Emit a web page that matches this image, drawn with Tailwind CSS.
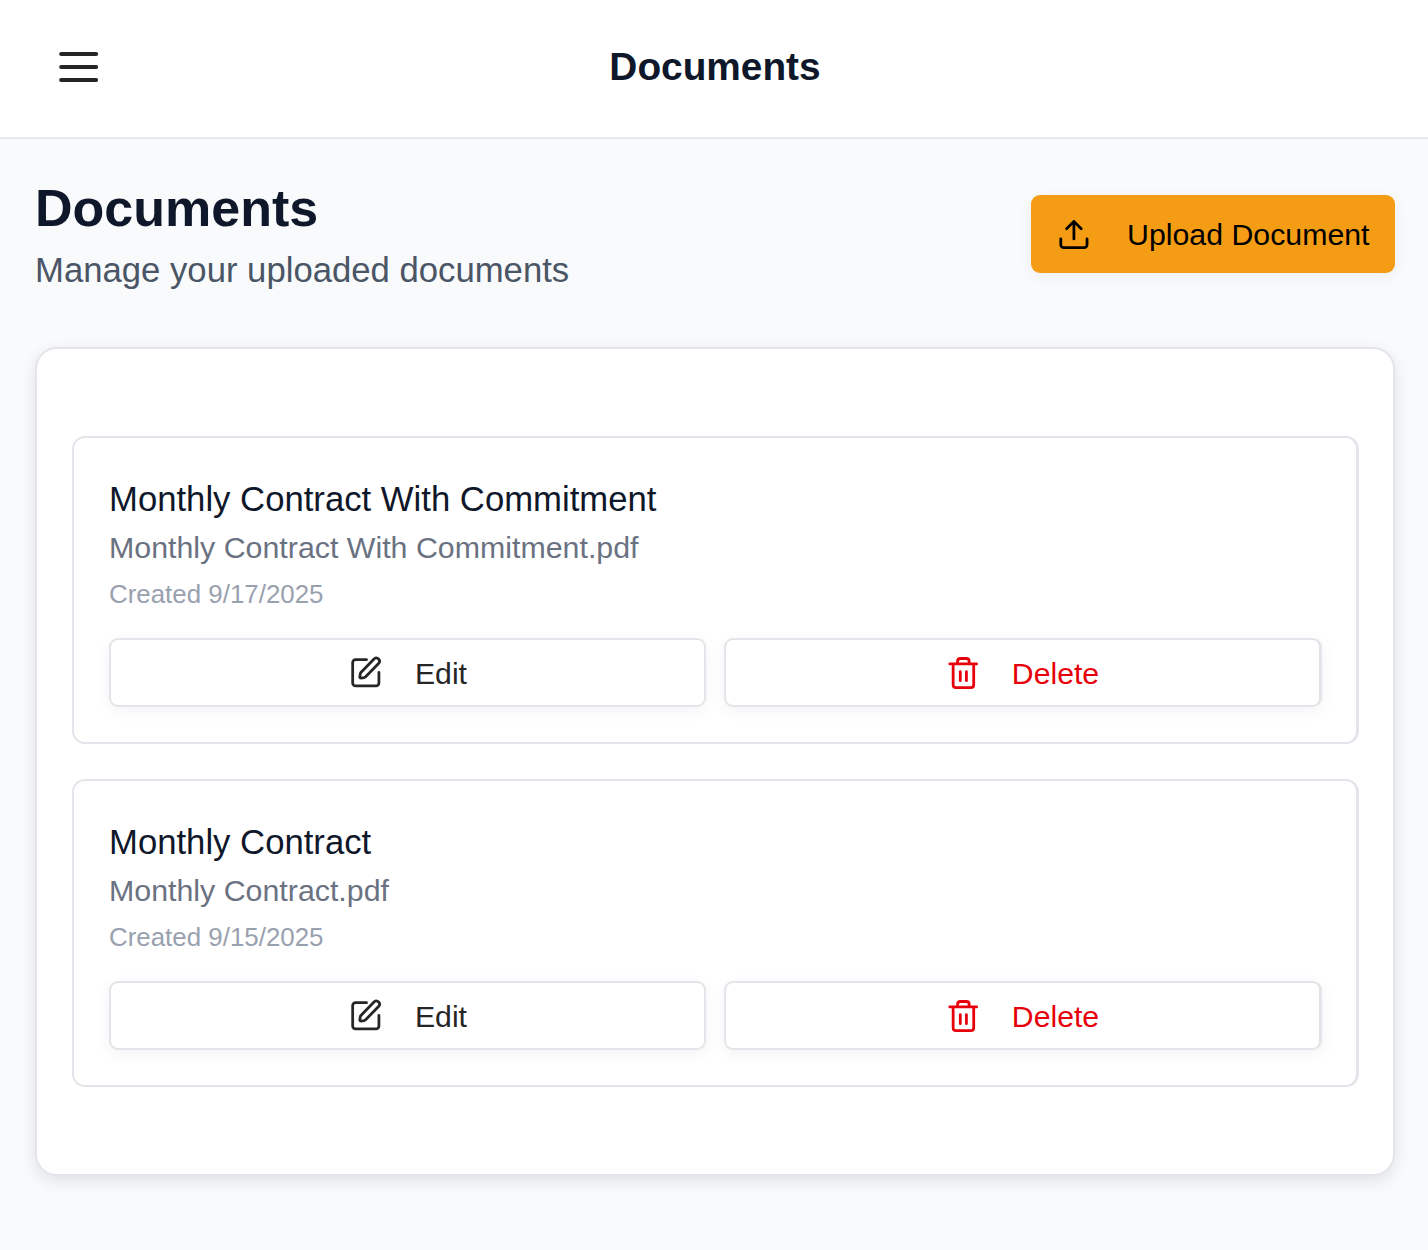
<!DOCTYPE html>
<html lang="en">
<head>
<meta charset="utf-8">
<title>Documents</title>
<script src="https://cdn.jsdelivr.net/npm/@tailwindcss/browser@4"></script>
</head>
<body class="min-h-screen bg-[#f9fafc] font-['Liberation_Sans',Arial,sans-serif] text-[#0f172a]">
<svg class="hidden">
  <symbol id="pen" viewBox="-0.2 -0.2 24 24" fill="none" stroke="currentColor" stroke-width="1.9" stroke-linecap="round" stroke-linejoin="round"><path d="M12.5 3H5a2 2 0 0 0-2 2v14a2 2 0 0 0 2 2h14a2 2 0 0 0 2-2v-7.2"/><path d="M17.800 2.400a2.200 2.200 0 0 1 3.100 3.100l-9 9.200a3 3 0 0 1-1.200.6l-1.900.3a.9.9 0 0 1-.9-.9l.3-1.900a3 3 0 0 1 .6-1.200z"/></symbol>
  <symbol id="trash" viewBox="0.3 -0.4 24 24" fill="none" stroke="currentColor" stroke-width="1.9" stroke-linecap="round" stroke-linejoin="round"><path d="M2.900 5.700h18.400M19.300 6v14c0 1.200-.8 2-2 2H7.200c-1.200 0-2-.8-2-2V6M8.200 5.500V4c0-1.200.8-2 2-2h4c1.200 0 2 .8 2 2v1.500M10.100 11v6.200M14.300 11v6.200"/></symbol>
</svg>
<header class="flex h-[139px] items-start justify-between border-b-2 border-[#e5e7eb] bg-white px-[52px] pt-[41px]">
  <svg class="size-[52px]" viewBox="0 0 24 24" fill="none" stroke="#262626" stroke-width="1.8" stroke-linecap="round"><path d="M4.2 6h16.2M4.2 12h16.2M4.2 18h16.2"/></svg>
  <div class="text-[38.8px] leading-[52px] font-bold">Documents</div>
  <div class="w-[50px]"></div>
</header>
<main class="px-[35px] pt-[35px]">
  <div class="flex items-start justify-between">
    <div class="pt-[4px]">
      <h1 class="text-[52px] leading-[61px] font-bold">Documents</h1>
      <p class="pt-[5px] text-[34.7px] leading-[52px] text-[#4a5565]">Manage your uploaded documents</p>
    </div>
    <button class="mt-[21px] -mr-[2px] flex h-[78px] w-[364px] items-center rounded-[9px] bg-[#f59c15] pl-[26px] text-[30.3px] text-black shadow-[0_4px_16px_rgba(0,0,0,0.05)]">
      <svg class="size-[35px]" viewBox="0.4 0 24 24" fill="none" stroke="currentColor" stroke-width="1.9" stroke-linecap="round" stroke-linejoin="round"><path d="M21 15v4a2 2 0 0 1-2 2H5a2 2 0 0 1-2-2v-4M17 8l-5-5-5 5M12 3v12"/></svg>
      <span class="ml-[35px] pt-[2px] whitespace-nowrap">Upload Document</span>
    </button>
  </div>
  <section class="mt-[51px] -mr-[2px] flex h-[829px] flex-col gap-[35px] rounded-[22px] border-2 border-[#e4e5ea] bg-white pr-[34px] pl-[35px] pt-[87px] shadow-[0_5px_16px_rgba(0,0,0,0.10)]">
    <article class="h-[308px] rounded-[13px] border-2 border-r-3 border-[#e4e5ea] px-[35px] pt-[35px]">
      <h2 class="text-[34.7px] leading-[52px]">Monthly Contract With Commitment</h2>
      <p class="pt-px text-[30.35px] leading-[44px] text-[#6a7282]">Monthly Contract With Commitment.pdf</p>
      <p class="pt-[2px] text-[25.9px] leading-[44px] text-[#99a1af]">Created 9/17/2025</p>
      <div class="mt-[22px] -mr-px grid grid-cols-[597px_598px] gap-[18px] text-[30.2px]">
        <button class="flex h-[69px] items-center justify-center gap-[32px] rounded-[9px] border-2 border-[#e4e5ea] bg-white text-[#262626] shadow-[0_4px_16px_rgba(0,0,0,0.05)]"><svg class="size-[35px]"><use href="#pen"/></svg><span class="pt-[2px]">Edit</span></button>
        <button class="flex h-[69px] items-center justify-center gap-[31px] rounded-[9px] border-2 border-r-3 border-[#e4e5ea] bg-white text-[#e7000b] shadow-[0_4px_16px_rgba(0,0,0,0.05)]"><svg class="size-[35px]"><use href="#trash"/></svg><span class="pt-[2px]">Delete</span></button>
      </div>
    </article>
    <article class="h-[308px] rounded-[13px] border-2 border-r-3 border-[#e4e5ea] px-[35px] pt-[35px]">
      <h2 class="text-[34.7px] leading-[52px]">Monthly Contract</h2>
      <p class="pt-px text-[30.35px] leading-[44px] text-[#6a7282]">Monthly Contract.pdf</p>
      <p class="pt-[2px] text-[25.9px] leading-[44px] text-[#99a1af]">Created 9/15/2025</p>
      <div class="mt-[22px] -mr-px grid grid-cols-[597px_598px] gap-[18px] text-[30.2px]">
        <button class="flex h-[69px] items-center justify-center gap-[32px] rounded-[9px] border-2 border-[#e4e5ea] bg-white text-[#262626] shadow-[0_4px_16px_rgba(0,0,0,0.05)]"><svg class="size-[35px]"><use href="#pen"/></svg><span class="pt-[2px]">Edit</span></button>
        <button class="flex h-[69px] items-center justify-center gap-[31px] rounded-[9px] border-2 border-r-3 border-[#e4e5ea] bg-white text-[#e7000b] shadow-[0_4px_16px_rgba(0,0,0,0.05)]"><svg class="size-[35px]"><use href="#trash"/></svg><span class="pt-[2px]">Delete</span></button>
      </div>
    </article>
  </section>
</main>
</body>
</html>
